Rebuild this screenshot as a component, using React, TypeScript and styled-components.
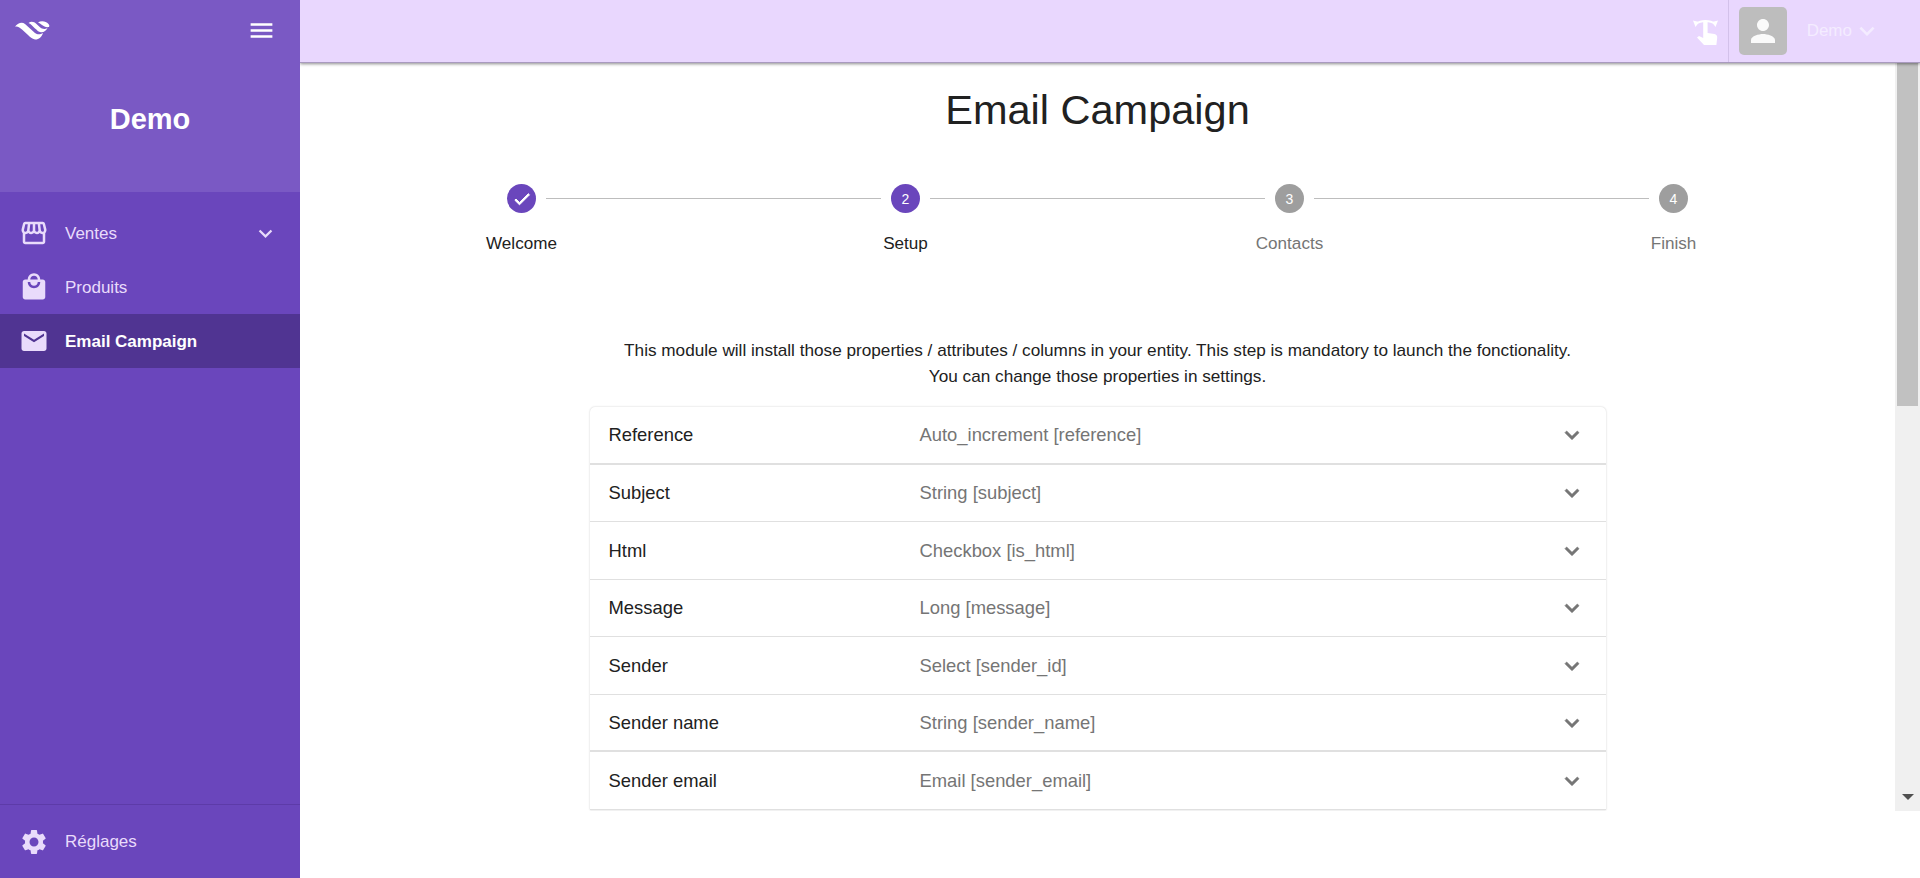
import React from "react";
import styled, { createGlobalStyle } from "styled-components";
import {
  MdOutlineStorefront,
  MdLocalMall,
  MdEmail,
  MdSettings,
  MdMenu,
  MdExpandMore,
  MdPerson,
  MdCheck,
} from "react-icons/md";

const Global = createGlobalStyle`
  html, body { margin: 0; padding: 0; height: 100%; overflow: hidden; background: #fff; }
  body { font-family: "Liberation Sans", Arial, sans-serif; color: #212121; }
  * { box-sizing: border-box; }
`;

const Shell = styled.div`
  display: flex;
  width: 1920px;
  height: 878px;
  overflow: hidden;
`;

const Sidebar = styled.aside`
  width: 300px;
  flex: none;
  display: flex;
  flex-direction: column;
  background: #6a46bc;
  color: #e9dbfb;
`;

const SideHeader = styled.div`
  height: 192px;
  flex: none;
  background: #7a59c4;
  display: flex;
  flex-direction: column;
`;

const SideTop = styled.div`
  height: 62px;
  flex: none;
  display: flex;
  align-items: center;
  justify-content: space-between;
  padding: 0 24px 2px 15px;
  color: #fff;
`;

const Brand = styled.div`
  flex: 1;
  display: flex;
  align-items: center;
  justify-content: center;
  font-size: 29px;
  font-weight: 700;
  color: #fff;
  padding-bottom: 16px;
`;

const Nav = styled.nav`
  flex: 1;
  padding-top: 14px;
`;

const NavItem = styled.div<{ $active?: boolean }>`
  height: 54px;
  width: 100%;
  display: flex;
  align-items: center;
  padding: 0 21px 0 19px;
  font-size: 17px;
  background: ${(p) => (p.$active ? "#503492" : "transparent")};
  color: ${(p) => (p.$active ? "#fff" : "#e9dbfb")};
  font-weight: ${(p) => (p.$active ? 700 : 400)};
  & > svg:first-child { flex: none; margin-right: 16px; color: #e9dbfb; }
`;

const NavLabel = styled.span`
  flex: 1;
  padding-top: 1px;
`;

const SideFooter = styled.div`
  flex: none;
  height: 74px;
  border-top: 1px solid #5d3ba8;
  display: flex;
  align-items: center;
`;

const Main = styled.div`
  flex: 1;
  min-width: 0;
  display: flex;
  flex-direction: column;
  overflow: hidden;
`;

const Topbar = styled.header`
  height: 63px;
  flex: none;
  display: flex;
  align-items: center;
  justify-content: flex-end;
  background: #e9d7fe;
  box-shadow: 0 1px 3px rgba(0, 0, 0, 0.45);
  border-bottom: 1px solid #a99abf;
  color: #f4ecff;
  position: relative;
  z-index: 1;
  padding-right: 38px;
`;

const TouchBox = styled.div`
  height: 62px;
  width: 46px;
  padding-left: 10px;
  display: flex;
  align-items: center;
  justify-content: flex-start;
  border-right: 1px solid #d3c1ea;
  color: #fff;
`;

const Avatar = styled.div`
  width: 48px;
  height: 48px;
  margin: 0 20px 0 10px;
  border-radius: 5px;
  background: #bdbdbd;
  display: flex;
  align-items: center;
  justify-content: center;
  color: #fafafa;
`;

const UserName = styled.span`
  font-size: 17px;
`;

const ViewportRow = styled.div`
  height: 748px;
  flex: none;
  display: flex;
`;

const Scroller = styled.main`
  flex: 1;
  min-width: 0;
  overflow: hidden;
  display: flex;
  flex-direction: column;
  align-items: center;
`;

const Title = styled.h1`
  margin: 22px 0 0;
  font-size: 41.5px;
  line-height: 50px;
  font-weight: 400;
  color: #212121;
`;

const Stepper = styled.div`
  width: 1536px;
  margin-top: 49px;
  display: flex;
`;

const Step = styled.div`
  flex: 1;
  display: flex;
  flex-direction: column;
  align-items: center;
`;

const StepHead = styled.div`
  width: 100%;
  display: flex;
  align-items: center;
`;

const Line = styled.div<{ $side: "left" | "right"; $hidden?: boolean }>`
  flex: 1;
  height: 1px;
  background: ${(p) => (p.$hidden ? "transparent" : "#bdbdbd")};
  margin-${(p) => (p.$side === "left" ? "right" : "left")}: 10px;
`;

const Circle = styled.div<{ $active: boolean }>`
  width: 29px;
  height: 29px;
  border-radius: 50%;
  flex: none;
  display: flex;
  align-items: center;
  justify-content: center;
  background: ${(p) => (p.$active ? "#6a46bc" : "#9e9e9e")};
  color: #fff;
  font-size: 14px;
`;

const CheckMark = styled(MdCheck)`
  path { stroke: currentColor; stroke-width: 1.2; }
  path[fill="none"] { stroke: none; }
`;

const StepLabel = styled.div<{ $active: boolean }>`
  margin-top: 21px;
  font-size: 17.1px;
  line-height: 20px;
  color: ${(p) => (p.$active ? "#212121" : "#757575")};
`;

const Intro = styled.p`
  margin: 83px 0 0;
  text-align: center;
  font-size: 17.18px;
  line-height: 26px;
  color: #212121;
`;

const Accordion = styled.div`
  width: 1016px;
  margin-top: 18.4px;
  border-radius: 5px 5px 0 0;
  box-shadow: 0 0 2px rgba(0, 0, 0, 0.22);
`;

const Row = styled.div<{ $thick: boolean }>`
  height: 57.5px;
  display: flex;
  align-items: center;
  padding: 0 20px 0 19px;
  border-bottom: ${(p) => (p.$thick ? 2 : 1)}px solid #e0e0e0;
`;

const RowName = styled.span`
  width: 311px;
  flex: none;
  font-size: 18.4px;
  color: #212121;
`;

const RowValue = styled.span`
  flex: 1;
  font-size: 18.4px;
  color: #757575;
`;

const RowIcon = styled(MdExpandMore)`
  color: #757575;
  flex: none;
  path { stroke: currentColor; stroke-width: 0.6; }
  path[fill="none"] { stroke: none; }
`;

const Scrollbar = styled.div`
  width: 25px;
  flex: none;
  background: #f0f0f0;
  display: flex;
  flex-direction: column;
  align-items: center;
`;

const Thumb = styled.div`
  width: 21px;
  height: 343px;
  background: #c1c1c1;
`;

const ScrollArrow = styled.div`
  margin-top: auto;
  margin-bottom: 11px;
  width: 0;
  height: 0;
  border-left: 6px solid transparent;
  border-right: 6px solid transparent;
  border-top: 6px solid #505050;
`;

const Logo = () => (
  <svg width="35" height="19" viewBox="0 0 35 19" fill="#fff" aria-hidden="true">
    <path d="M0 5.5 C3 2 7 0.5 10 3 L20 12 C22 13.5 25 14 28 12 C27 16 23 19 20 18.5 C17 18 15 16 13 14 L7 8.5 C5 6.5 3 5 0 5.5Z" />
    <path d="M13.5 2 C16 0 19 0.5 21.5 3 L25 6.3 C27 8 30 8.5 32.5 7 C31 10 28 12 25 11 C23 10.5 22 9 20 7.5 L16.5 4 C15.5 3 14.5 2.4 13.5 2Z" />
    <path d="M23 1.5 C26 -0.5 31 0 33.5 3 C34.5 4 34.5 5 34 6 C31 6.5 29 5.5 27 4 C25.5 3 24.5 2 23 1.5Z" />
  </svg>
);

const TouchIcon = () => (
  <svg width="25" height="27" viewBox="0 0 25 27" fill="#fff" aria-hidden="true">
    <path d="M3 6 C8 2 17 2 22 6" fill="none" stroke="#fff" strokeWidth="1.8" />
    <path d="M0 2.5 L6 4 L2.5 9Z M25 2.5 L19 4 L22.5 9Z" />
    <path d="M10.2 4 L14.6 4 L14.6 15 L21.5 16 C23.2 16.4 24.4 17.6 24.2 19.5 L23.4 27 L11 27 L4 19.5 L6 18 L10.2 20Z" />
  </svg>
);

const steps = [
  { label: "Welcome", mark: <CheckMark size={20} />, active: true },
  { label: "Setup", mark: "2", active: true },
  { label: "Contacts", mark: "3", active: false },
  { label: "Finish", mark: "4", active: false },
];

const rows = [
  ["Reference", "Auto_increment [reference]"],
  ["Subject", "String [subject]"],
  ["Html", "Checkbox [is_html]"],
  ["Message", "Long [message]"],
  ["Sender", "Select [sender_id]"],
  ["Sender name", "String [sender_name]"],
  ["Sender email", "Email [sender_email]"],
];

export default function App() {
  return (
    <Shell>
      <Global />
      <Sidebar>
        <SideHeader>
          <SideTop>
            <Logo />
            <MdMenu size={29} />
          </SideTop>
          <Brand>Demo</Brand>
        </SideHeader>
        <Nav>
          <NavItem>
            <MdOutlineStorefront size={30} />
            <NavLabel>Ventes</NavLabel>
            <MdExpandMore size={27} />
          </NavItem>
          <NavItem>
            <MdLocalMall size={30} />
            <NavLabel>Produits</NavLabel>
          </NavItem>
          <NavItem $active>
            <MdEmail size={30} />
            <NavLabel>Email Campaign</NavLabel>
          </NavItem>
        </Nav>
        <SideFooter>
          <NavItem>
            <MdSettings size={30} />
            <NavLabel>Réglages</NavLabel>
          </NavItem>
        </SideFooter>
      </Sidebar>
      <Main>
        <Topbar>
          <TouchBox>
            <TouchIcon />
          </TouchBox>
          <Avatar>
            <MdPerson size={36} />
          </Avatar>
          <UserName>Demo</UserName>
          <MdExpandMore size={30} />
        </Topbar>
        <ViewportRow>
          <Scroller>
            <Title>Email Campaign</Title>
            <Stepper>
              {steps.map((s, i) => (
                <Step key={s.label}>
                  <StepHead>
                    <Line $side="left" $hidden={i === 0} />
                    <Circle $active={s.active}>{s.mark}</Circle>
                    <Line $side="right" $hidden={i === steps.length - 1} />
                  </StepHead>
                  <StepLabel $active={s.active}>{s.label}</StepLabel>
                </Step>
              ))}
            </Stepper>
            <Intro>
              This module will install those properties / attributes / columns in your entity. This step is mandatory to launch the fonctionality.
              <br />
              You can change those properties in settings.
            </Intro>
            <Accordion>
              {rows.map(([name, value], i) => (
                <Row key={name} $thick={i === 0 || i === 5}>
                  <RowName>{name}</RowName>
                  <RowValue>{value}</RowValue>
                  <RowIcon size={28} />
                </Row>
              ))}
            </Accordion>
          </Scroller>
          <Scrollbar>
            <Thumb />
            <ScrollArrow />
          </Scrollbar>
        </ViewportRow>
      </Main>
    </Shell>
  );
}
